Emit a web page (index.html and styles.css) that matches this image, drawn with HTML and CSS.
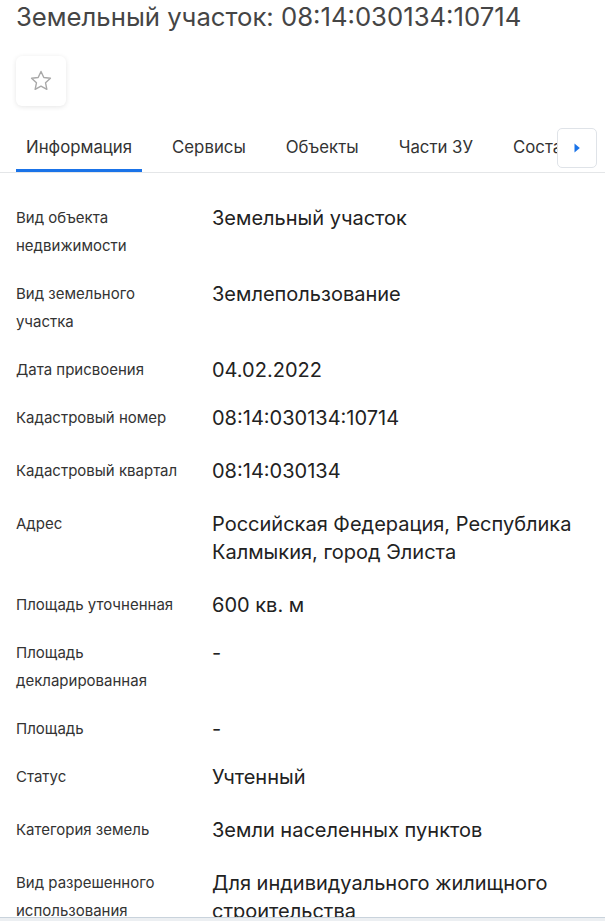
FILE: index.html
```html
<!DOCTYPE html>
<html lang="ru">
<head>
<meta charset="utf-8">
<title>Земельный участок: 08:14:030134:10714</title>
<link rel="stylesheet" href="styles.css">
</head>
<body>
<div class="page">
  <h1 class="title">Земельный участок: 08:14:030134:10714</h1>
  <div class="actions">
    <button class="fav" type="button" aria-label="В избранное">
      <svg width="26" height="26" viewBox="0 0 24 24"><path d="M12 3.2l2.6 5.6 6.1.7-4.5 4.2 1.2 6-5.4-3-5.4 3 1.2-6-4.5-4.2 6.1-.7z" fill="none" stroke="#a9a9a9" stroke-width="1.3" stroke-linejoin="round"/></svg>
    </button>
  </div>
  <nav class="tabs">
    <div class="tabs-track">
      <span class="tab tab--active">Информация</span>
      <span class="tab">Сервисы</span>
      <span class="tab">Объекты</span>
      <span class="tab">Части ЗУ</span>
      <span class="tab">Состав</span>
      <span class="tab">Правообладатели</span>
    </div>
    <button class="tabs-next" type="button" aria-label="Далее">
      <svg width="8" height="12" viewBox="0 0 8 12"><path d="M1.5 1.5v9L6.8 6z" fill="#1a73e8"/></svg>
    </button>
  </nav>
  <dl class="info">
    <div class="row"><dt class="label">Вид объекта<br>недвижимости</dt><dd class="value">Земельный участок</dd></div>
    <div class="row"><dt class="label">Вид земельного<br>участка</dt><dd class="value">Землепользование</dd></div>
    <div class="row"><dt class="label">Дата присвоения</dt><dd class="value">04.02.2022</dd></div>
    <div class="row row--loose"><dt class="label">Кадастровый номер</dt><dd class="value">08:14:030134:10714</dd></div>
    <div class="row row--loose"><dt class="label">Кадастровый квартал</dt><dd class="value">08:14:030134</dd></div>
    <div class="row row--loose"><dt class="label">Адрес</dt><dd class="value">Российская Федерация, Республика Калмыкия, город Элиста</dd></div>
    <div class="row"><dt class="label">Площадь уточненная</dt><dd class="value">600 кв. м</dd></div>
    <div class="row"><dt class="label">Площадь<br>декларированная</dt><dd class="value">-</dd></div>
    <div class="row"><dt class="label">Площадь</dt><dd class="value">-</dd></div>
    <div class="row row--loose"><dt class="label">Статус</dt><dd class="value">Учтенный</dd></div>
    <div class="row row--loose"><dt class="label">Категория земель</dt><dd class="value">Земли населенных пунктов</dd></div>
    <div class="row"><dt class="label">Вид разрешенного<br>использования</dt><dd class="value">Для индивидуального жилищного строительства</dd></div>
  </dl>
</div>
<div class="window-edge"></div>
</body>
</html>
```
FILE: styles.css
```css
* { box-sizing: border-box; }
html, body { margin: 0; padding: 0; background: #fff; }
body {
  font-family: Inter, Roboto, "Noto Sans", "Liberation Sans", sans-serif;
  color: #222;
  overflow: hidden;
}
.page { width: 605px; }
.title {
  margin: 0;
  padding: 0 16px;
  font-size: 25.7px;
  line-height: 34px;
  font-weight: 400;
  color: #454545;
  white-space: nowrap;
}
.actions {
  padding: 22px 16px 0;
  display: flex;
}
.fav {
  width: 50px;
  height: 50px;
  border: none;
  border-radius: 6px;
  background: #fff;
  box-shadow: 0 1px 5px rgba(0,0,0,0.10);
  display: flex;
  align-items: center;
  justify-content: center;
  padding: 0;
}
.tabs {
  position: relative;
  margin-top: 20px;
  border-bottom: 1px solid #e4e6e8;
  overflow: hidden;
}
.tabs-track {
  display: flex;
  gap: 20px;
  padding: 0 16px;
  white-space: nowrap;
}
.tab {
  padding: 10px 10px 11px;
  font-size: 16.8px;
  line-height: 22px;
  color: #333;
  border-bottom: 3px solid transparent;
  flex: none;
}
.tab--active { border-bottom-color: #1a73e8; }
.tabs-next {
  position: absolute;
  top: 2px;
  right: 8px;
  width: 40px;
  height: 40px;
  border: 1px solid #dfe3e8;
  border-radius: 5px;
  background: #fff;
  display: flex;
  align-items: center;
  justify-content: center;
  padding: 0;
}
.info {
  margin: 0;
  padding: 31px 0 0;
}
.row {
  display: grid;
  grid-template-columns: 196px 1fr;
  padding: 0 20px 20px 16px;
}
.row--loose { padding-bottom: 25px; }
.label {
  margin: 0;
  font-size: 15px;
  line-height: 28px;
  color: #333;
}
.value {
  margin: 0;
  font-size: 20px;
  line-height: 28px;
  color: #222;
}
.window-edge {
  position: fixed;
  left: 0;
  right: 0;
  bottom: 0;
  height: 4px;
  background: #eceff2;
  border-top: 1px solid #c9d3dc;
}
```
